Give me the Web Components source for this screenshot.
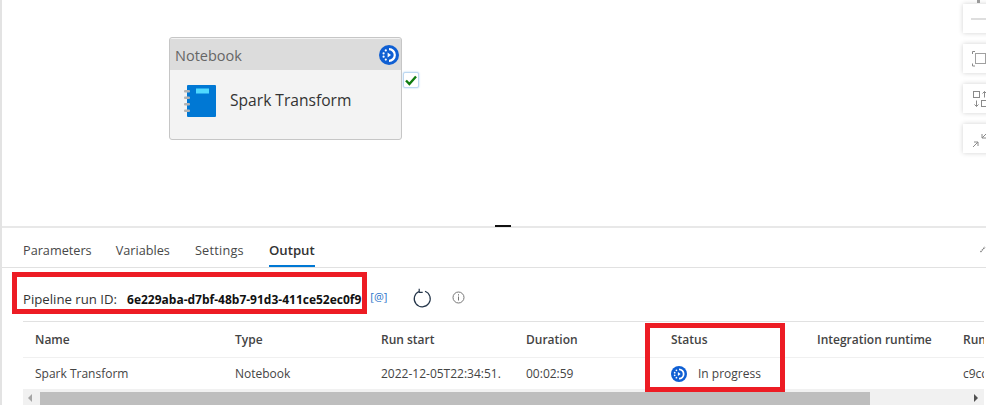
<!DOCTYPE html>
<html>
<head>
<meta charset="utf-8">
<style>
  html, body { margin: 0; height: 405px; overflow: hidden; background: #fff; }
  body { font-family: "Open Sans", "Noto Sans", sans-serif; color: #323130; }
</style>
</head>
<body>
<pipeline-page>
  <pipeline-canvas>
    <activity-node title="Notebook" name="Spark Transform"></activity-node>
    <canvas-toolbar></canvas-toolbar>
  </pipeline-canvas>
  <output-panel>
    <tab-bar></tab-bar>
    <run-info run-id="6e229aba-d7bf-48b7-91d3-411ce52ec0f9"></run-info>
    <run-table></run-table>
  </output-panel>
</pipeline-page>

<script>
const progressIcon = (size) => `
  <svg width="${size}" height="${size}" viewBox="0 0 20 20" style="display:block;flex:none">
    <circle cx="10" cy="10" r="10" fill="#0f5fd3"/>
    <path d="M10 4.200a5.800 5.800 0 0 1 0 11.600" fill="none" stroke="#fff" stroke-width="2.200"/>
    <circle cx="6.800" cy="5.400" r="1.100" fill="#fff"/>
    <circle cx="4.600" cy="8.400" r="1.100" fill="#fff"/>
    <circle cx="4.600" cy="11.700" r="1.100" fill="#fff"/>
    <circle cx="6.800" cy="14.600" r="1.100" fill="#fff"/>
    <path d="M8.600 7.400 12 10l-3.400 2.600z" fill="#fff"/>
  </svg>`;

class PipelinePage extends HTMLElement {
  constructor() {
    super();
    this.attachShadow({ mode: "open" });
    this.shadowRoot.innerHTML = `
      <style>
        :host {
          display: flex;
          flex-direction: column;
          height: 405px;
          width: 986px;
          box-sizing: border-box;
          border-left: 2px solid #e3e3e3;
          overflow: hidden;
        }
      </style>
      <slot></slot>`;
  }
}

class PipelineCanvas extends HTMLElement {
  constructor() {
    super();
    this.attachShadow({ mode: "open" });
    this.shadowRoot.innerHTML = `
      <style>
        :host {
          display: block;
          position: relative;
          height: 226px;
          flex: none;
          border-bottom: 2px solid #e8e8e8;
        }
        #handle {
          position: absolute;
          left: 493px;
          top: 225px;
          width: 16px;
          height: 2px;
          background: #111;
        }
      </style>
      <slot></slot>
      <div id="handle"></div>`;
  }
}

class ActivityNode extends HTMLElement {
  constructor() {
    super();
    this.attachShadow({ mode: "open" });
    this.shadowRoot.innerHTML = `
      <style>
        :host {
          display: block;
          position: absolute;
          left: 167px;
          top: 37px;
          width: 233px;
          height: 103px;
          box-sizing: border-box;
          border: 1px solid #c6c6c6;
          border-radius: 3px;
          background: #f3f3f3;
        }
        #head {
          display: flex;
          align-items: center;
          justify-content: space-between;
          height: 31px;
          margin-top: 1px;
          padding: 0 2px 0 5px;
          background: #dcdcdc;
          font-size: 14.5px;
          color: #666;
        }
        #title { position: relative; top: 1px; }
        #body {
          display: flex;
          align-items: center;
          gap: 14px;
          padding: 14px 0 0 14px;
          font-size: 15.6px;
          color: #333;
        }
        #name { margin-top: -2px; }
        #check {
          position: absolute;
          left: 233px;
          top: 34px;
          width: 16px;
          height: 16px;
          box-sizing: border-box;
          border: 1px solid #bcd8f2;
          border-radius: 2px;
          background: #fff;
          box-shadow: 0 0 2px #a9cdee;
        }
      </style>
      <div id="head"><span id="title"></span>${progressIcon(20)}</div>
      <div id="body">
        <svg width="32" height="34" viewBox="0 0 32 34">
          <rect x="3" y="1" width="29" height="32" rx="1" fill="#0078d4"/>
          <rect x="12" y="4.500" width="13" height="5" fill="#50d9ff"/>
          <g fill="#b4b4b4">
            <rect x="0" y="6" width="6" height="2.400" rx="1"/>
            <rect x="0" y="12.500" width="6" height="2.400" rx="1"/>
            <rect x="0" y="19" width="6" height="2.400" rx="1"/>
            <rect x="0" y="25.500" width="6" height="2.400" rx="1"/>
          </g>
        </svg>
        <span id="name"></span>
      </div>
      <div id="check">
        <svg width="14" height="14" viewBox="0 0 14 14" style="display:block">
          <path d="M2 7.500 5.400 11 12 3.500" fill="none" stroke="#107c10" stroke-width="2.400"/>
        </svg>
      </div>`;
  }

  connectedCallback() {
    this.shadowRoot.getElementById("title").textContent = this.getAttribute("title") || "";
    this.shadowRoot.getElementById("name").textContent = this.getAttribute("name") || "";
  }
}

class CanvasToolbar extends HTMLElement {
  constructor() {
    super();
    this.attachShadow({ mode: "open" });
    this.shadowRoot.innerHTML = `
      <style>
        :host {
          position: absolute;
          left: 961px;
          top: 4px;
          display: flex;
          flex-direction: column;
          gap: 11px;
        }
        .tool {
          width: 30px;
          height: 29px;
          background: #fff;
          box-shadow: 0 0 5px rgba(0,0,0,.18);
        }
        svg { display: block; }
        #knob {
          position: absolute;
          left: 14px;
          top: -4px;
          width: 3px;
          height: 3px;
          background: #9a9a9a;
        }
      </style>
      <div id="knob"></div>
      <div class="tool">
        <svg width="30" height="29"><path d="M8 15h16" stroke="#bdbdbd"/></svg>
      </div>
      <div class="tool">
        <svg width="30" height="29" fill="none" stroke="#8a8a8a">
          <rect x="12.500" y="9.500" width="10" height="10" stroke="#a0a0a0"/>
          <path d="M9.500 10V7.500H12M23 7.500h2.500V10M9.500 19.500v2.500H12M23 22h2.500v-2.500"/>
        </svg>
      </div>
      <div class="tool">
        <svg width="30" height="29" fill="none" stroke="#8a8a8a">
          <rect x="10.500" y="7.500" width="6" height="6"/>
          <rect x="18.500" y="16.500" width="6" height="6"/>
          <path d="M21.500 13.500V7.500M19.500 9.500l2-2 2 2M13.500 16.500v6M11.500 20.500l2 2 2-2"/>
        </svg>
      </div>
      <div class="tool">
        <svg width="30" height="29" fill="none" stroke="#8a8a8a">
          <path d="M24 9l-5 5M19 10v4h4M10 23l5-5M11 18h4v4"/>
        </svg>
      </div>`;
  }
}

class OutputPanel extends HTMLElement {
  constructor() {
    super();
    this.attachShadow({ mode: "open" });
    this.shadowRoot.innerHTML = `
      <style>
        :host { display: block; position: relative; flex: 1; font-size: 12px; }
        #box-run, #box-status {
          position: absolute;
          box-sizing: border-box;
          border: 5px solid #ed1c24;
          pointer-events: none;
        }
        #box-run { left: 10px; top: 44px; width: 355px; height: 42px; }
        #box-status { left: 643px; top: 95px; width: 140px; height: 69px; }
      </style>
      <slot></slot>
      <div id="box-run"></div>
      <div id="box-status"></div>`;
  }
}

class TabBar extends HTMLElement {
  constructor() {
    super();
    this.attachShadow({ mode: "open" });
    this.shadowRoot.innerHTML = `
      <style>
        :host {
          display: flex;
          height: 40px;
          box-sizing: border-box;
          padding-left: 21px;
          border-bottom: 1px solid #e1e1e1;
          font-size: 12.700px;
          color: #484848;
        }
        span { padding-top: 13px; height: 26px; box-sizing: content-box; margin-right: 24px; }
        #variables { margin-right: 25px; }
        #settings { letter-spacing: .25px; margin-right: 25px; }
        .on { height: 24px; font-weight: 600; color: #333; border-bottom: 2px solid #0078d4; font-size: 13.200px; }
        svg { margin: 18px 0 0 auto; display: block; }
      </style>
      <span>Parameters</span>
      <span id="variables">Variables</span>
      <span id="settings">Settings</span>
      <span class="on">Output</span>
      <svg width="6" height="7" viewBox="0 0 6 7"><path d="M0.500 6 5 1" stroke="#777" stroke-width="1.300" stroke-dasharray="1.500 .6"/></svg>`;
  }
}

class RunInfo extends HTMLElement {
  constructor() {
    super();
    this.attachShadow({ mode: "open" });
    this.shadowRoot.innerHTML = `
      <style>
        :host {
          display: flex;
          align-items: center;
          height: 53px;
          box-sizing: border-box;
          padding: 9px 0 0 21px;
          font-size: 13.200px;
          color: #333;
        }
        #id { margin-left: 10px; font-weight: 700; font-size: 12px; color: #111; white-space: nowrap; }
        #at { margin: -6px 0 0 9px; font-size: 11px; color: #2c74c9; }
        svg { display: block; }
      </style>
      <span>Pipeline run ID:</span>
      <span id="id"></span>
      <span id="at">[@]</span>
      <svg width="20" height="20" viewBox="0 0 20 20" style="margin:-3px 0 0 25px" fill="none">
        <path d="M7 3.500A8 8 0 1 0 13 3.300" stroke="#25364a" stroke-width="1.200"/>
        <path d="M7.200 0.800v3.500h3.500" stroke="#25364a" stroke-width="1.200"/>
      </svg>
      <svg width="13" height="13" viewBox="0 0 13 13" style="margin:-3px 0 0 20px" fill="none" stroke="#777">
        <circle cx="6.500" cy="6.500" r="5.500"/>
        <path d="M6.500 5.500v4M6.500 3.200v1.300"/>
      </svg>`;
  }

  connectedCallback() {
    this.shadowRoot.getElementById("id").textContent = this.getAttribute("run-id") || "";
  }
}

class RunTable extends HTMLElement {
  constructor() {
    super();
    this.attachShadow({ mode: "open" });
    this.shadowRoot.innerHTML = `
      <style>
        :host {
          display: block;
          margin-left: 21px;
          width: 961px;
          border-top: 1px solid #e1e1e1;
          overflow: hidden;
          font-size: 12px;
        }
        .row {
          display: grid;
          grid-template-columns: 200px 146px 145px 145px 146px 146px 146px;
          align-items: center;
          width: 1075px;
        }
        .row > * { padding-left: 12px; white-space: nowrap; overflow: hidden; }
        #head { height: 35px; font-weight: 600; color: #444; border-bottom: 1px solid #f0f0f0; }
        #row { height: 31px; color: #444; }
        .status { display: flex; align-items: center; gap: 11px; }
        #bar {
          display: flex;
          align-items: center;
          height: 16px;
          background: #f1f1f1;
          position: relative;
        }
        #thumb { position: absolute; left: 17px; top: 3px; height: 13px; width: 830px; background: #bebebe; }
        .arrow { position: absolute; top: 5px; width: 0; height: 0; border: 4px solid transparent; }
        #left { left: 5px; border-right-color: #a6a6a6; border-left-width: 0; }
        #right { left: 951px; border-left-color: #505050; border-right-width: 0; }
      </style>
      <div class="row" id="head">
        <span>Name</span><span>Type</span><span>Run start</span><span>Duration</span><span>Status</span><span>Integration runtime</span><span>Run ID</span>
      </div>
      <div class="row" id="row">
        <span>Spark Transform</span><span>Notebook</span><span>2022-12-05T22:34:51.</span><span>00:02:59</span>
        <span class="status">${progressIcon(16)}<span>In progress</span></span>
        <span></span><span>c9cc</span>
      </div>
      <div id="bar">
        <div class="arrow" id="left"></div>
        <div id="thumb"></div>
        <div class="arrow" id="right"></div>
      </div>`;
  }
}

customElements.define("pipeline-page", PipelinePage);
customElements.define("pipeline-canvas", PipelineCanvas);
customElements.define("activity-node", ActivityNode);
customElements.define("canvas-toolbar", CanvasToolbar);
customElements.define("output-panel", OutputPanel);
customElements.define("tab-bar", TabBar);
customElements.define("run-info", RunInfo);
customElements.define("run-table", RunTable);
</script>
</body>
</html>
